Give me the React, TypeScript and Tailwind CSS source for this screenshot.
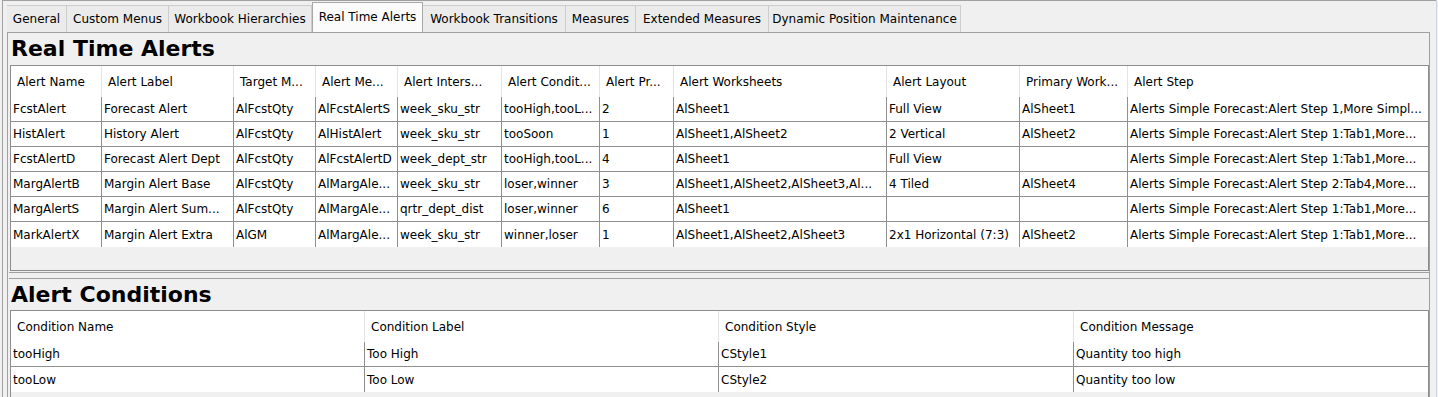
const tabs = [
  { label: "General", w: "w-[60px]" },
  { label: "Custom Menus", w: "w-[102px]" },
  { label: "Workbook Hierarchies", w: "w-[143px]" },
  { label: "Real Time Alerts", w: "w-[111px]", active: true },
  { label: "Workbook Transitions", w: "w-[143px]" },
  { label: "Measures", w: "w-[70px]" },
  { label: "Extended Measures", w: "w-[133px]" },
  { label: "Dynamic Position Maintenance", w: "w-[192px]" },
];

const alertCols = [
  { name: "Alert Name", w: "w-[91px]" },
  { name: "Alert Label", w: "w-[132px]" },
  { name: "Target M...", w: "w-[82px]" },
  { name: "Alert Me...", w: "w-[82px]" },
  { name: "Alert Inters...", w: "w-[104px]" },
  { name: "Alert Condit...", w: "w-[98px]" },
  { name: "Alert Pr...", w: "w-[74px]" },
  { name: "Alert Worksheets", w: "w-[213px]" },
  { name: "Alert Layout", w: "w-[133px]" },
  { name: "Primary Work...", w: "w-[108px]" },
  { name: "Alert Step", w: "flex-1" },
];

const alertRows = [
  ["FcstAlert", "Forecast Alert", "AlFcstQty", "AlFcstAlertS", "week_sku_str", "tooHigh,tooL...", "2", "AlSheet1", "Full View", "AlSheet1", "Alerts Simple Forecast:Alert Step 1,More Simpl..."],
  ["HistAlert", "History Alert", "AlFcstQty", "AlHistAlert", "week_sku_str", "tooSoon", "1", "AlSheet1,AlSheet2", "2 Vertical", "AlSheet2", "Alerts Simple Forecast:Alert Step 1:Tab1,More..."],
  ["FcstAlertD", "Forecast Alert Dept", "AlFcstQty", "AlFcstAlertD", "week_dept_str", "tooHigh,tooL...", "4", "AlSheet1", "Full View", "", "Alerts Simple Forecast:Alert Step 1:Tab1,More..."],
  ["MargAlertB", "Margin Alert Base", "AlFcstQty", "AlMargAle...", "week_sku_str", "loser,winner", "3", "AlSheet1,AlSheet2,AlSheet3,Al...", "4 Tiled", "AlSheet4", "Alerts Simple Forecast:Alert Step 2:Tab4,More..."],
  ["MargAlertS", "Margin Alert Sum...", "AlFcstQty", "AlMargAle...", "qrtr_dept_dist", "loser,winner", "6", "AlSheet1", "", "", "Alerts Simple Forecast:Alert Step 1:Tab1,More..."],
  ["MarkAlertX", "Margin Alert Extra", "AlGM", "AlMargAle...", "week_sku_str", "winner,loser", "1", "AlSheet1,AlSheet2,AlSheet3", "2x1 Horizontal (7:3)", "AlSheet2", "Alerts Simple Forecast:Alert Step 1:Tab1,More..."],
];

const condCols = [
  { name: "Condition Name", w: "w-[354px]" },
  { name: "Condition Label", w: "w-[354px]" },
  { name: "Condition Style", w: "w-[355px]" },
  { name: "Condition Message", w: "flex-1" },
];

const condRows = [
  ["tooHigh", "Too High", "CStyle1", "Quantity too high"],
  ["tooLow", "Too Low", "CStyle2", "Quantity too low"],
];

function Grid({ cols, rows, height }: { cols: { name: string; w: string }[]; rows: string[][]; height: string }) {
  return (
    <div className={`ml-px border border-[#8c8c8c] bg-[#f0f0f0] ${height} overflow-hidden`}>
      <div className="flex h-[31px] bg-white">
        {cols.map((c, i) => (
          <div
            key={c.name}
            className={`${c.w} shrink-0 flex items-center pl-[6px] whitespace-nowrap overflow-hidden ${i < cols.length - 1 ? "border-r border-[#e4e4e4]" : ""}`}
          >
            {c.name}
          </div>
        ))}
      </div>
      {rows.map((r, ri) => (
        <div key={ri} className={`flex h-[25px] bg-white ${ri < rows.length - 1 ? "border-b border-[#8f8f8f]" : ""}`}>
          {r.map((cell, ci) => (
            <div
              key={ci}
              className={`${cols[ci].w} shrink-0 flex items-center pl-[2px] whitespace-nowrap overflow-hidden ${ci < r.length - 1 ? "border-r border-[#8f8f8f]" : ""}`}
            >
              {cell}
            </div>
          ))}
        </div>
      ))}
    </div>
  );
}

export default function App() {
  return (
    <div className="w-[1438px] h-[397px] flex bg-[#f0f0f0] text-[12px] text-black font-['DejaVu_Sans',sans-serif] overflow-hidden">
      <div className="w-[1436px] pl-[2px]">
        <div className="h-full border-l border-t border-[#a0a0a0] pl-[4px] pr-[6px]">
          {/* tab strip */}
          <div className="flex items-end h-[31px]">
            {tabs.map((t) =>
              t.active ? (
                <div
                  key={t.label}
                  className={`${t.w} h-[30px] flex items-center justify-center pb-[2px] bg-[#fbfbfb] border border-b-0 border-[#a8a8a8]`}
                >
                  {t.label}
                </div>
              ) : (
                <div
                  key={t.label}
                  className={`${t.w} h-[27px] flex items-center justify-center bg-[#ebebeb] border-t border-r border-[#cdcdcd]`}
                >
                  {t.label}
                </div>
              )
            )}
          </div>

          {/* content panel */}
          <div className="border border-[#a0a0a0] h-[366px] pl-px">
            <div className="border-b border-[#a0a0a0] pb-px">
              <div className="h-[32px] pl-[2px] flex items-center font-bold text-[22px] leading-none">Real Time Alerts</div>
              <Grid cols={alertCols} rows={alertRows} height="h-[206px]" />
            </div>
            <div className="mt-[5px] border-t border-[#a0a0a0]">
              <div className="h-[31px] pl-[2px] flex items-center font-bold text-[22px] leading-none">Alert Conditions</div>
              <Grid cols={condCols} rows={condRows} height="h-[90px]" />
            </div>
          </div>
        </div>
      </div>
      <div className="w-px h-full bg-[#c9d6e5]" />
      <div className="w-px h-full bg-[#f0f0f0]" />
    </div>
  );
}
